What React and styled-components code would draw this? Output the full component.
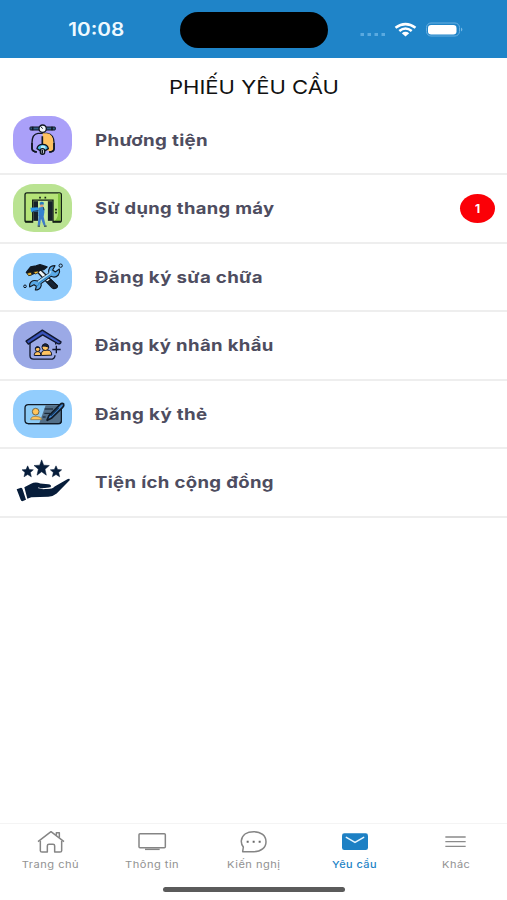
import React from "react";
import { useState } from "react";
import styled, { createGlobalStyle } from "styled-components";

const GlobalStyle = createGlobalStyle`
  * {
    box-sizing: border-box;
  }
  body {
    margin: 0;
    background: #fff;
    font-family: Inter, "Open Sans", sans-serif;
  }
`;
const Screen = styled.div`
  height: 100vh;
  display: flex;
  flex-direction: column;
  overflow: hidden;
`;
const StatusBar = styled.header`
  height: 57.5px;
  flex: none;
  display: grid;
  grid-template-columns: 180px 148px 1fr;
  align-items: center;
  padding-top: 2px;
  background: #1f84c8;
`;
/* the typeface is wider than Inter, so every label is stretched sideways */
const Wide = styled.span`
  display: inline-block;
  white-space: nowrap;
  transform: scaleX(${(p) => p.$stretch || 1.15});
  transform-origin: ${(p) => p.$origin || "center"};
`;
const Clock = styled.div`
  padding-left: 12px;
  text-align: center;
  font-size: 18px;
  font-weight: 600;
  line-height: 22px;
  color: #eef9ff;
`;
const Island = styled.div`
  height: 36px;
  border-radius: 18px;
  background: #000;
`;
const Signals = styled.div`
  display: flex;
  align-items: center;
  padding-left: 31px;
`;
const Title = styled.h1`
  margin: 0;
  height: 49px;
  flex: none;
  padding-top: 10px;
  display: flex;
  align-items: center;
  justify-content: center;
  font-size: 19.2px;
  font-weight: 400;
  color: #111;
`;
const List = styled.ul`
  margin: 0;
  padding: 0;
  flex: 1;
  list-style: none;
`;
const Row = styled.li`
  height: 68.5px;
  display: flex;
  align-items: center;
  padding: 0 12px 0 12.5px;
  border-bottom: 2px solid #eeeeee;
`;
const Tile = styled.div`
  width: 59px;
  height: 48px;
  flex: none;
  border-radius: 21px / 19px;
  overflow: hidden;
  background: ${(p) => p.$color};
  svg {
    display: block;
    width: 59px;
    height: 48px;
  }
`;
const RowLabel = styled.div`
  flex: 1;
  margin-left: 23.3px;
  font-size: 16px;
  font-weight: 700;
  letter-spacing: 0.3px;
  color: #4e4d60;
`;
const Badge = styled.div`
  width: 35px;
  height: 29px;
  border-radius: 50%;
  display: flex;
  align-items: center;
  justify-content: center;
  background: #fb0007;
  color: #fff;
  font-size: 12px;
  font-weight: 700;
`;
const TabBar = styled.nav`
  height: 58px;
  flex: none;
  display: grid;
  grid-template-columns: repeat(5, 1fr);
  border-top: 1px solid #f4f4f4;
`;
const Tab = styled.button`
  display: flex;
  flex-direction: column;
  align-items: center;
  padding: 6px 0 0;
  border: 0;
  background: none;
  font-family: inherit;
  font-size: 9.5px;
  font-weight: ${(p) => (p.$active ? 500 : 400)};
  letter-spacing: 0.4px;
  line-height: 14px;
  color: ${(p) => (p.$active ? "#2383c6" : "#929292")};
  svg {
    width: 30px;
    height: 24px;
    margin-bottom: 4px;
    flex: none;
  }
`;
const HomeArea = styled.div`
  height: 19px;
  flex: none;
  display: flex;
  justify-content: center;
  padding-top: 6px;
`;
const HomeIndicator = styled.div`
  width: 182px;
  height: 5px;
  border-radius: 3px;
  background: #5b5b5b;
`;

const ScooterIcon = () => (
  <svg viewBox="37 23 177 144" fill="none" stroke="#101622" strokeWidth="4">
    <path d="M107 131Q95 130 94 121V104Q94 77 112 75H139Q160 78 160 104V121Q160 130 147 131" fill="#aaa0f9" />
    <path d="M126 75H138Q158 77 158 103V121Q158 129 146 129L126 119Z" fill="#ffc260" stroke="none" />
    <path d="M109 131Q95 130 94 121V104M160 104V121Q160 130 145 131" strokeWidth="5" />
    <path d="M125 84V108" strokeWidth="5" />
    <rect x="88" y="56" width="76" height="9" rx="2" fill="#315f86" strokeWidth="3" />
    <path d="M96 55V66M154 55V66" strokeWidth="5" />
    <circle cx="126" cy="61" r="11" fill="#f1f7fb" />
    <path d="M120 54L126 61" strokeWidth="3" />
    <path d="M109 121Q111 108 126 108Q141 108 143 121L134 127H118Z" fill="#4cb9e8" />
    <path d="M121 113Q126 109 134 114V122H121Z" fill="#b9eff8" stroke="none" />
    <rect x="119" y="121" width="13" height="17" rx="6" fill="#e9edf0" />
    <path d="M125 124V136" strokeWidth="5" />
  </svg>
);
const ElevatorIcon = () => (
  <svg viewBox="37 24.5 177 144" fill="none">
    <rect x="73" y="51" width="109" height="88" rx="6" fill="#b5e477" stroke="#132017" strokeWidth="4" />
    <path d="M172 53H179V136H160Q172 127 172 112Z" fill="#83c540" />
    <path d="M96 139V73H157V139" fill="#c7e998" stroke="#132017" strokeWidth="4" />
    <rect x="98" y="76" width="14" height="59" fill="#17222a" />
    <rect x="141" y="76" width="15" height="59" fill="#17222a" />
    <rect x="112" y="76" width="29" height="63" fill="#c7eba0" />
    <path d="M98 142H155" stroke="#bae392" strokeWidth="9" />
    <path d="M73 137H96M157 137H180" stroke="#132017" strokeWidth="4" />
    <path d="M118 63V68M134 63V68M166 99V104M166 108V113" stroke="#132017" strokeWidth="5" />
    <path d="M117 81Q123 74 130 81L128 88H118Z" fill="#237dc2" />
    <rect x="119" y="86" width="9" height="8" fill="#df9b79" />
    <path d="M113 96L127 93Q132 96 131 109L129 121H113Z" fill="#3582cf" />
    <path d="M89 96L111 94L114 106L92 109Z" fill="#2d99e9" />
    <path d="M113 104L96 107M128 94L130 103" stroke="#263d58" strokeWidth="3" />
    <path d="M114 118H128L135 149H129L121 129L118 149H111Z" fill="#3d7cca" />
    <path d="M111 151H118M130 151H138" stroke="#263c54" strokeWidth="4" />
  </svg>
);
const ToolsIcon = () => (
  <svg viewBox="37 26 177 144" fill="none" stroke="#111923" strokeWidth="4" strokeLinejoin="round">
    <path d="M110 83L120 76L169 124Q171 130 162 132Q157 134 153 129Z" fill="#eff4f4" />
    <path d="M140 113L151 106L170 124Q171 131 160 132Z" fill="#172638" />
    <path d="M77 84L90 68L106 65L118 61L139 68L129 76L117 78L108 84L86 93Z" fill="#111820" />
    <path d="M79 87L84 94L94 91L91 84ZM98 83L111 80L114 84L105 89Z" fill="#f5bd32" strokeWidth="2" />
    <path d="M163 64Q148 64 145 75Q142 82 145 87L111 110Q99 106 92 112Q85 118 87 128L100 121L107 126L104 137Q116 137 120 128Q123 123 121 118L151 96Q164 102 173 92Q179 84 176 74L164 83L156 77Z" fill="#5aa9e6" strokeWidth="3.4" />
    <path d="M112 112L147 88L151 80" stroke="#abd9f6" strokeWidth="4" />
    <path d="M109 126Q115 121 116 115L149 92" stroke="#277fbd" strokeWidth="3" />
    <circle cx="180" cy="64" r="5" strokeWidth="3" />
    <circle cx="73" cy="126" r="4" strokeWidth="3" />
  </svg>
);
const FamilyIcon = () => (
  <svg viewBox="37 27.5 177 144" fill="none" stroke="#10172d" strokeWidth="4" strokeLinejoin="round">
    <path d="M88 90V132Q88 142 99 142H149Q163 142 163 130M165 91V98" />
    <path d="M76 88L125 55L181 90Q180 97 173 96L126 69L83 97Z" fill="#344eb4" />
    <path d="M83 91L125 63L173 92" stroke="#4059bd" strokeWidth="3" />
    <path d="M101 131V127Q102 119 112 119Q121 119 121 131Z" fill="#ffc461" strokeWidth="3" />
    <path d="M122 131V124Q124 115 134 115H142Q153 116 153 130Z" fill="#ffc461" strokeWidth="3" />
    <circle cx="111" cy="112" r="7" fill="#ffc461" strokeWidth="3" />
    <circle cx="134" cy="106" r="10" fill="#ffc461" strokeWidth="3" />
    <path d="M124 103Q129 93 140 98L145 106Q132 101 124 103M104 110Q106 102 117 107" fill="#182440" strokeWidth="3" />
    <path d="M155 113H180M167 102V124" />
  </svg>
);
const CardIcon = () => (
  <svg viewBox="37 29 177 144" fill="none" stroke="#111b27" strokeWidth="4" strokeLinejoin="round">
    <rect x="73" y="73" width="109" height="57" rx="10" fill="#8bcaf5" />
    <path d="M135 75H174Q180 76 180 83V120Q180 128 172 128H116Z" fill="#536f88" stroke="none" />
    <path d="M90 117Q91 108 106 108Q121 108 124 118H90Z" fill="#ffc45b" stroke="#7d704f" strokeWidth="2" />
    <circle cx="105" cy="94" r="10" fill="#ffc45b" stroke="#6c664f" strokeWidth="3" />
    <path d="M132 86H157M131 99H148M126 110H135" strokeWidth="3" />
    <path d="M139 119L145 106L178 73Q184 67 189 71Q191 76 186 81L152 114L140 120Z" fill="#3f85cf" strokeWidth="5" />
    <path d="M150 106L174 82" stroke="#163453" strokeWidth="4" />
    <path d="M182 88V123Q181 130 173 130H82" />
  </svg>
);
const CommunityIcon = () => (
  <svg viewBox="37 30.5 177 144" fill="#071d3a">
    <path d="M123 36L129 52L146 53L133 64L137 82L123 72L109 82L113 64L100 53L117 52Z" stroke="#071d3a" strokeWidth="1.5" />
    <path d="M81 54L86 65L98 66L89 74L92 87L81 80L70 87L73 74L64 66L76 65ZM166 54L171 65L183 66L174 74L177 87L166 80L155 87L158 74L149 66L161 65Z" stroke="#071d3a" strokeWidth="1.5" />
    <path d="M48 124L61 120Q65 121 66 125L76 156L65 160Q61 160 60 156Z" />
    <path d="M71 118L91 108Q104 101 119 107L143 109Q153 110 151 118L126 121V124L153 122Q158 121 162 116L200 94Q209 91 207 97L168 137Q157 146 143 147L92 148L80 153Z" />
    <path d="M112 119.5L120 122H144Q152 121 152 115" fill="none" stroke="#fff" strokeWidth="2" />
  </svg>
);

const HomeIcon = () => (
  <svg viewBox="109 45 90 72" fill="none" stroke="#858585" strokeWidth="4.5" strokeLinejoin="round">
    <path d="M115 80L154 50L193 80" />
    <path d="M122 77V107Q122 111 127 111H143V92Q143 88 148 88H160Q165 88 165 92V111H181Q186 111 186 107V77M170 60V53H179V68" />
  </svg>
);
const ScreenIcon = () => (
  <svg viewBox="412 45 90 72" fill="none" stroke="#858585" strokeWidth="4.5">
    <rect x="418" y="56" width="79" height="42" rx="3" />
    <path d="M436 103H480" />
  </svg>
);
const ChatIcon = () => (
  <svg viewBox="715 45 90 72" fill="none" stroke="#858585" strokeWidth="4.5" strokeLinejoin="round">
    <path d="M729 110L731 96Q724 87 725 77C727 59 743 50 762 50C784 50 799 62 799 80C799 98 784 110 763 110Z" />
    <path d="M741 80H747M759 80H765M777 80H783" stroke="#696969" strokeWidth="6" />
  </svg>
);
const MailIcon = () => (
  <svg viewBox="258 45 90 72">
    <rect x="264" y="55" width="78" height="50" rx="7" fill="#1d80c4" />
    <path d="M277 67L303 82L329 67" fill="none" stroke="#e6f5ff" strokeWidth="4.5" strokeLinecap="round" />
  </svg>
);
const MenuIcon = () => (
  <svg viewBox="560 45 90 72" stroke="#8b8b8b" strokeWidth="4">
    <path d="M573 66H634M573 80H634M573 94H634" />
  </svg>
);
const StatusIcons = () => (
  <svg width="106" height="18" viewBox="0 0 106 18" fill="none">
    <path d="M1.5 13.5H5M8.5 13.5H12M15.5 13.5H19M22.5 13.5H26" stroke="#5aaae0" strokeWidth="3" />
    <g stroke="#fff" strokeWidth="2.6">
      <path d="M36.5 6.8Q46.5 -.4 56.5 6.8" />
      <path d="M40.3 10Q46.5 5 52.7 10" />
    </g>
    <path d="M42.8 12.3Q46.5 9.4 50.2 12.3L46.5 15.4Z" fill="#fff" />
    <rect x="67.5" y="2" width="33" height="13" rx="4.5" stroke="#69afe0" />
    <rect x="69" y="4" width="28.5" height="9.4" rx="3.2" fill="#fff" />
    <path d="M102.2 6.5Q104.5 8.5 102.2 10.5Z" fill="#8bc5ec" />
  </svg>
);

const requests = [
  { label: "Phương tiện", icon: <ScooterIcon />, color: "#aaa0f9", stretch: 1.17 },
  { label: "Sử dụng thang máy", icon: <ElevatorIcon />, color: "#bae392", stretch: 1.15, count: 1 },
  { label: "Đăng ký sửa chữa", icon: <ToolsIcon />, color: "#92cdfd", stretch: 1.165 },
  { label: "Đăng ký nhân khẩu", icon: <FamilyIcon />, color: "#9ba9e6", stretch: 1.16 },
  { label: "Đăng ký thẻ", icon: <CardIcon />, color: "#92cdfd", stretch: 1.17 },
  { label: "Tiện ích cộng đồng", icon: <CommunityIcon />, color: "transparent", stretch: 1.16 },
];

const tabs = [
  { label: "Trang chủ", icon: <HomeIcon />, stretch: 1.17 },
  { label: "Thông tin", icon: <ScreenIcon />, stretch: 1.17 },
  { label: "Kiến nghị", icon: <ChatIcon />, stretch: 1.17 },
  { label: "Yêu cầu", icon: <MailIcon />, stretch: 1.15 },
  { label: "Khác", icon: <MenuIcon />, stretch: 1.16 },
];

function RequestRow(props) {
  const { label, icon, color, stretch, count } = props;
  return (
    <Row>
      <Tile $color={color}>{icon}</Tile>
      <RowLabel>
        <Wide $stretch={stretch} $origin="left center">
          {label}
        </Wide>
      </RowLabel>
      {count && <Badge>{count}</Badge>}
    </Row>
  );
}

function App() {
  const [active, setActive] = useState("Yêu cầu");
  return (
    <Screen>
      <GlobalStyle />
      <StatusBar>
        <Clock>
          <Wide $stretch={1.15}>10:08</Wide>
        </Clock>
        <Island />
        <Signals>
          <StatusIcons />
        </Signals>
      </StatusBar>
      <Title>
        <Wide $stretch={1.15}>PHIẾU YÊU CẦU</Wide>
      </Title>
      <List>
        {requests.map((item) => (
          <RequestRow key={item.label} {...item} />
        ))}
      </List>
      <TabBar>
        {tabs.map((tab) => (
          <Tab
            key={tab.label}
            $active={active === tab.label}
            onClick={() => setActive(tab.label)}
          >
            {tab.icon}
            <Wide $stretch={tab.stretch}>{tab.label}</Wide>
          </Tab>
        ))}
      </TabBar>
      <HomeArea>
        <HomeIndicator />
      </HomeArea>
    </Screen>
  );
}

export default App;
